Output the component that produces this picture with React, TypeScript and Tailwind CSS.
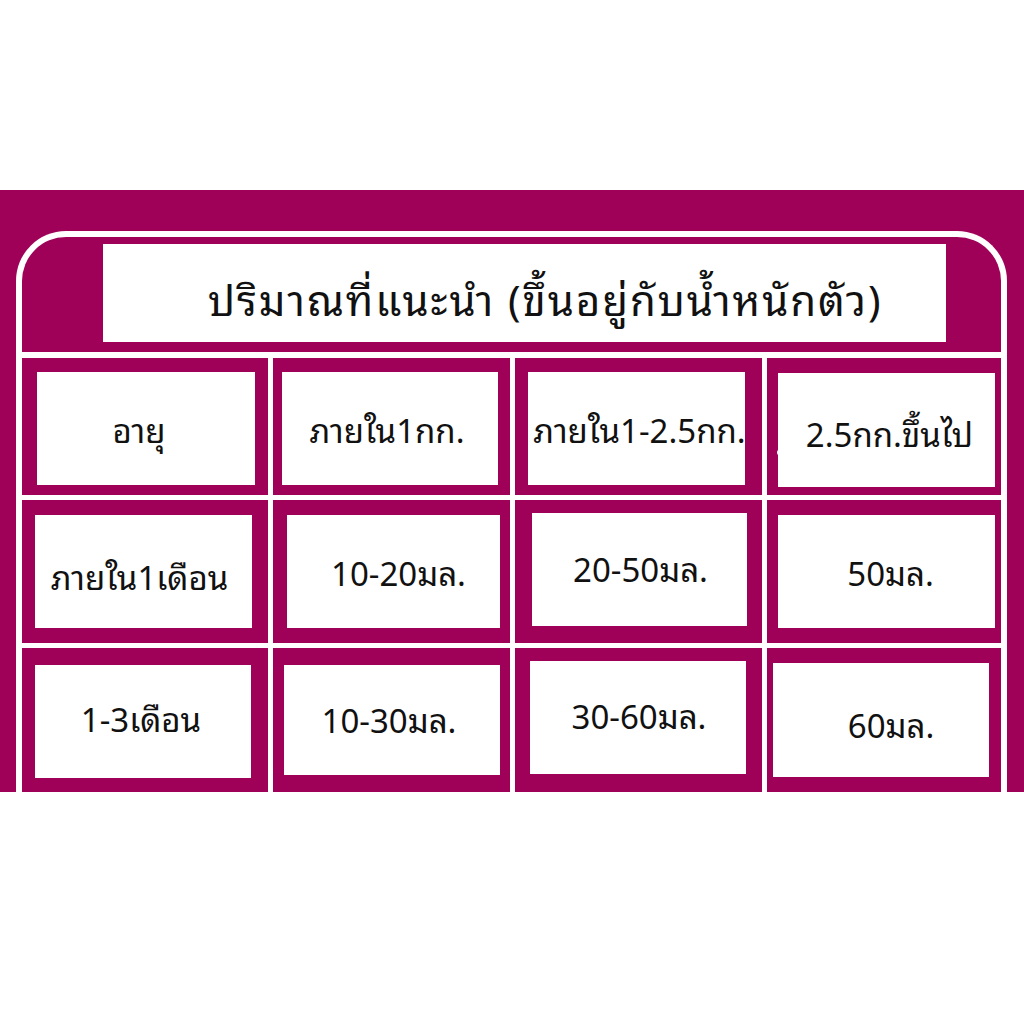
import React from "react";

type Cell = { text: string; pad: string; shift: string };

const rows: { h: string; cells: Cell[] }[] = [
  {
    h: "h-[137px]",
    cells: [
      { text: "อายุ", pad: "pl-[15px] pt-[14px] pr-[13px] pb-[10px]", shift: "-translate-x-[7px]" },
      { text: "ภายใน1กก.", pad: "pl-[9px] pt-[14px] pr-[12px] pb-[10px]", shift: "-translate-x-[3px]" },
      { text: "ภายใน1-2.5กก.", pad: "pl-[13px] pt-[14px] pr-[17px] pb-[10px]", shift: "translate-x-[3px]" },
      { text: "2.5กก.ขึ้นไป", pad: "pl-[11px] pt-[15px] pr-[6px] pb-[8px]", shift: "translate-x-[3px] translate-y-[2px]" },
    ],
  },
  {
    h: "h-[143px]",
    cells: [
      { text: "ภายใน1เดือน", pad: "pl-[13px] pt-[15px] pr-[16px] pb-[15px]", shift: "-translate-x-[4px] translate-y-[4px]" },
      { text: "10-20มล.", pad: "pl-[14px] pt-[15px] pr-[10px] pb-[15px]", shift: "translate-x-[5px]" },
      { text: "20-50มล.", pad: "pl-[17px] pt-[13px] pr-[15px] pb-[17px]", shift: "translate-x-[1px] -translate-y-[2px]" },
      { text: "50มล.", pad: "pl-[11px] pt-[15px] pr-[6px] pb-[15px]", shift: "translate-x-[4px]" },
    ],
  },
  {
    h: "h-[144px]",
    cells: [
      { text: "1-3เดือน", pad: "pl-[13px] pt-[17px] pr-[17px] pb-[14px]", shift: "-translate-x-[2px] -translate-y-[4px]" },
      { text: "10-30มล.", pad: "pl-[11px] pt-[17px] pr-[10px] pb-[17px]", shift: "-translate-x-[3px] -translate-y-[2px]" },
      { text: "30-60มล.", pad: "pl-[15px] pt-[13px] pr-[16px] pb-[18px]", shift: "translate-x-[1px] -translate-y-[3px]" },
      { text: "60มล.", pad: "pl-[6px] pt-[15px] pr-[12px] pb-[15px]", shift: "translate-x-[10px] translate-y-[3px]" },
    ],
  },
];

const colW = ["w-[246px]", "w-[237px]", "w-[247px]", "w-[234px]"];

export default function App() {
  return (
    <div
      className="w-[1024px] h-[1024px] bg-white flex flex-col"
      style={{ fontFamily: '"Noto Sans Thai Looped", "Noto Sans", "Noto Sans Thai", Tahoma, sans-serif' }}
    >
      <div className="h-[190px] shrink-0" />
      <div className="h-[602px] shrink-0 bg-[#9f0058] pt-[41px] pl-[16px] pr-[17px] overflow-hidden">
        <div className="h-[600px] border-[6px] border-b-0 border-white rounded-t-[50px] flex flex-col">
          <div className="mt-[7px] ml-[81px] mr-[55px] h-[98px] bg-white flex items-center pl-[105px] pt-[8px]">
            <span className="text-[42px] tracking-[1.9px] text-[#111] whitespace-nowrap leading-none">
              ปริมาณที่แนะนำ (ขึ้นอยู่กับน้ำหนักตัว)
            </span>
          </div>
          <div className="mt-[10px] bg-white pt-[6px] flex flex-col gap-[5px]">
            {rows.map((row, ri) => (
              <div key={ri} className={`flex gap-[5px] ${row.h}`}>
                {row.cells.map((c, ci) => (
                  <div key={ci} className={`${colW[ci]} shrink-0 bg-[#9f0058] flex relative ${c.pad}`}>
                    <div className="flex-1 bg-white flex items-center justify-center">
                      <span className={`text-[33px] text-[#111] whitespace-nowrap leading-none ${c.shift}`}>
                        {c.text}
                      </span>
                    </div>
                    {ri === 0 && ci === 3 ? (
                      <span className="absolute left-[10px] top-[92px] w-[4px] h-[5px] rounded-full bg-white" />
                    ) : null}
                  </div>
                ))}
              </div>
            ))}
          </div>
        </div>
      </div>
    </div>
  );
}
